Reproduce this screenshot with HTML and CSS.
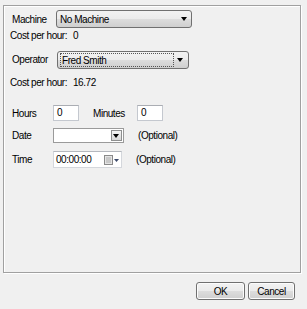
FILE: index.html
```html
<!DOCTYPE html>
<html lang="en">
<head>
    <meta charset="UTF-8">
    <meta name="viewport" content="width=device-width, initial-scale=1.0">
    <title>Cost Entry</title>
    <link rel="stylesheet" href="styles.css">
</head>
<body>
    <div class="frame">
        <div class="row row1">
            <span class="label lab-machine">Machine</span>
            <div class="combo combo-machine">
                <span class="combo-text">No Machine</span>
                <span class="arrow"></span>
            </div>
        </div>
        <div class="row cost cost1">
            <span class="cost-label">Cost per hour:</span>
            <span class="cost-value">0</span>
        </div>
        <div class="row row3">
            <span class="label lab-operator">Operator</span>
            <div class="combo combo-operator">
                <span class="combo-text focus">Fred Smith</span>
                <span class="arrow"></span>
            </div>
        </div>
        <div class="row cost cost2">
            <span class="cost-label">Cost per hour:</span>
            <span class="cost-value">16.72</span>
        </div>
        <div class="row row5">
            <span class="label lab-short">Hours</span>
            <div class="box">0</div>
            <span class="label lab-minutes">Minutes</span>
            <div class="box">0</div>
        </div>
        <div class="row row6">
            <span class="label lab-short">Date</span>
            <div class="date">
                <span class="date-btn"><span class="arrow"></span></span>
            </div>
            <span class="optional">(Optional)</span>
        </div>
        <div class="row row7">
            <span class="label lab-short">Time</span>
            <div class="time">
                <span class="time-text">00:00:00</span>
                <svg class="cal" width="16" height="10" viewBox="0 0 16 10">
                    <rect x="0.5" y="0.5" width="8" height="9" fill="#e4e4e4" stroke="#8a8a8a"/>
                    <rect x="2" y="2" width="5" height="6" fill="#c8c8c8"/>
                    <path d="M10 4 L15 4 L12.5 7 Z" fill="#3c4a6a"/>
                </svg>
            </div>
            <span class="optional">(Optional)</span>
        </div>
    </div>
    <div class="buttons">
        <div class="btn btn-ok">OK</div>
        <div class="btn btn-cancel">Cancel</div>
    </div>
</body>
</html>
```

FILE: styles.css
```css
*{
    margin: 0;
    padding: 0;
    box-sizing: border-box;
}
body{
    width: 307px;
    height: 309px;
    background-color: #f0f0f0;
    font-family: "Liberation Sans", Arial, sans-serif;
    font-size: 10px;
    letter-spacing: -0.45px;
    color: #000;
    white-space: nowrap;
    overflow: hidden;
}
.frame{
    margin: 5px 0 0 3px;
    width: 298px;
    height: 268px;
    border: 1px solid #a0a0a0;
    box-shadow: inset 1px 1px 0 #fff, 1px 1px 0 #fff;
    display: flex;
    flex-direction: column;
}
.row{
    display: flex;
    align-items: center;
}
.label{
    padding-left: 8px;
}
.lab-machine{
    width: 52px;
}
.lab-operator{
    width: 53px;
    margin-top: -2px;
}
.lab-short{
    width: 49px;
}
.lab-minutes{
    width: 58px;
    padding-left: 14px;
}
.row1{
    margin-top: 4px;
    height: 18px;
}
.cost{
    height: 14px;
    padding-left: 6px;
}
.cost-label{
    width: 63px;
}
.row3{
    margin-top: 9px;
    height: 18px;
}
.cost2{
    margin-top: 6px;
}
.row5{
    margin-top: 16px;
    height: 16px;
}
.row6{
    margin-top: 7px;
    height: 15px;
}
.row7{
    margin-top: 8px;
    height: 17px;
}

/* dropdown lists */
.combo{
    height: 18px;
    border: 1px solid #707070;
    border-radius: 3px;
    background: linear-gradient(#f2f2f2 0%, #ebebeb 50%, #dddddd 51%, #cfcfcf 100%);
    display: flex;
    align-items: center;
    position: relative;
}
.combo-machine{
    width: 136px;
}
.combo-operator{
    width: 132px;
}
.combo-text{
    padding-left: 3px;
    line-height: 13px;
}
.focus{
    margin-left: 2px;
    padding-left: 1px;
    width: 114px;
    height: 14px;
    border: 1px dotted #555;
}
.arrow{
    position: absolute;
    right: 4px;
    top: 6px;
    width: 0;
    height: 0;
    border-left: 3px solid transparent;
    border-right: 3px solid transparent;
    border-top: 4px solid #000;
}
.combo-operator .arrow{
    right: 5px;
}

/* text boxes */
.box{
    width: 26px;
    height: 16px;
    background-color: #fff;
    border: 1px solid #c4c8cf;
    border-top-color: #aaadb3;
    padding-left: 3px;
    line-height: 14px;
}
.date{
    width: 71px;
    height: 15px;
    background-color: #fff;
    border: 1px solid #9a9a9a;
    position: relative;
}
.date-btn{
    position: absolute;
    right: 1px;
    top: 1px;
    width: 11px;
    height: 11px;
    border: 1px solid #8e8f8f;
    background: linear-gradient(#f4f4f4, #d8d8d8);
}
.date-btn .arrow{
    right: 2px;
    top: 3px;
}
.time{
    width: 69px;
    height: 17px;
    background-color: #fff;
    border: 1px solid #d4d7dc;
    border-top-color: #b5b8be;
    display: flex;
    align-items: center;
    padding-left: 2px;
}
.time-text{
    width: 46px;
}
.cal{
    margin-left: 2px;
}
.optional{
    margin-left: 14px;
}

/* buttons */
.buttons{
    display: flex;
    justify-content: flex-end;
    gap: 3px;
    margin-top: 9px;
    padding-right: 12px;
}
.btn{
    height: 18px;
    border: 1px solid #707070;
    border-radius: 3px;
    background: linear-gradient(#f2f2f2 0%, #ebebeb 50%, #dddddd 51%, #cfcfcf 100%);
    box-shadow: inset 0 0 0 1px #fcfcfc;
    display: flex;
    align-items: center;
    justify-content: center;
}
.btn-ok{
    width: 49px;
}
.btn-cancel{
    width: 47px;
}
```
